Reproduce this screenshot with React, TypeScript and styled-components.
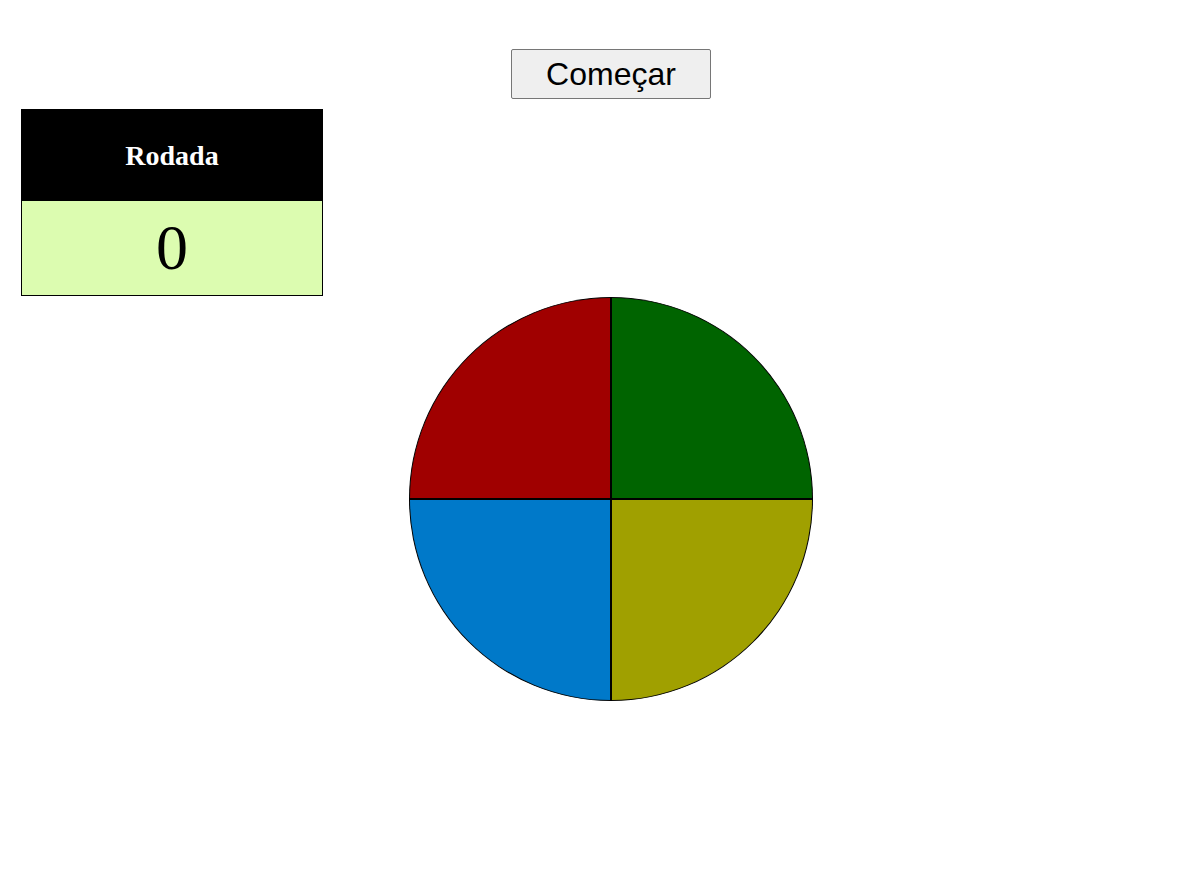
import React from "react";
import styled, { createGlobalStyle } from "styled-components";

const GlobalStyle = createGlobalStyle`
  html, body {
    margin: 0;
    padding: 0;
    background: #ffffff;
  }
  body {
    font-family: "Liberation Serif", "Times New Roman", serif;
  }
`;

const Page = styled.main`
  display: flex;
  flex-direction: column;
  padding-top: 49px;
  width: 1185px;
  box-sizing: border-box;
`;

const CenterRow = styled.div<{ $gap?: number }>`
  display: flex;
  justify-content: center;
  padding-left: 37px;
  margin-top: ${(p) => p.$gap ?? 0}px;
`;

const StartButton = styled.button`
  width: 200px;
  height: 50px;
  box-sizing: border-box;
  background: #efefef;
  border: 1px solid #767676;
  border-radius: 2px;
  font-family: "Liberation Sans", Arial, sans-serif;
  font-size: 32px;
  color: #000000;
  padding: 0;
  display: flex;
  align-items: center;
  justify-content: center;
  cursor: pointer;
`;

const Scoreboard = styled.section`
  margin: 10px 0 0 21px;
  width: 302px;
  box-sizing: border-box;
  border: 1px solid #000000;
  display: flex;
  flex-direction: column;
`;

const ScoreHeader = styled.h2`
  margin: 0;
  height: 91px;
  background: #000000;
  color: #ffffff;
  font-family: "Liberation Serif", "Times New Roman", serif;
  font-weight: bold;
  font-size: 28px;
  display: flex;
  align-items: center;
  justify-content: center;
`;

const ScoreValue = styled.div`
  height: 94px;
  background: #dcfcb0;
  color: #000000;
  font-family: "Liberation Serif", "Times New Roman", serif;
  font-size: 64px;
  display: flex;
  align-items: center;
  justify-content: center;
`;

const Wheel = styled.div`
  display: grid;
  grid-template-columns: 202px 202px;
  grid-template-rows: 202px 202px;
`;

type Corner = "tl" | "tr" | "bl" | "br";

const radiusFor: Record<Corner, string> = {
  tl: "100% 0 0 0",
  tr: "0 100% 0 0",
  bl: "0 0 0 100%",
  br: "0 0 100% 0",
};

const Pad = styled.button<{ $color: string; $corner: Corner }>`
  box-sizing: border-box;
  width: 202px;
  height: 202px;
  padding: 0;
  margin: 0;
  border: 1px solid #000000;
  background: ${(p) => p.$color};
  border-radius: ${(p) => radiusFor[p.$corner]};
  cursor: pointer;
`;

const pads: { color: string; corner: Corner; label: string }[] = [
  { color: "#a00000", corner: "tl", label: "vermelho" },
  { color: "#006400", corner: "tr", label: "verde" },
  { color: "#0079c9", corner: "bl", label: "azul" },
  { color: "#a0a000", corner: "br", label: "amarelo" },
];

export default function App() {
  return (
    <>
      <GlobalStyle />
      <Page>
        <CenterRow>
          <StartButton type="button">Começar</StartButton>
        </CenterRow>
        <Scoreboard>
          <ScoreHeader>Rodada</ScoreHeader>
          <ScoreValue>0</ScoreValue>
        </Scoreboard>
        <CenterRow $gap={1}>
          <Wheel>
            {pads.map((p) => (
              <Pad key={p.label} $color={p.color} $corner={p.corner} aria-label={p.label} />
            ))}
          </Wheel>
        </CenterRow>
      </Page>
    </>
  );
}
